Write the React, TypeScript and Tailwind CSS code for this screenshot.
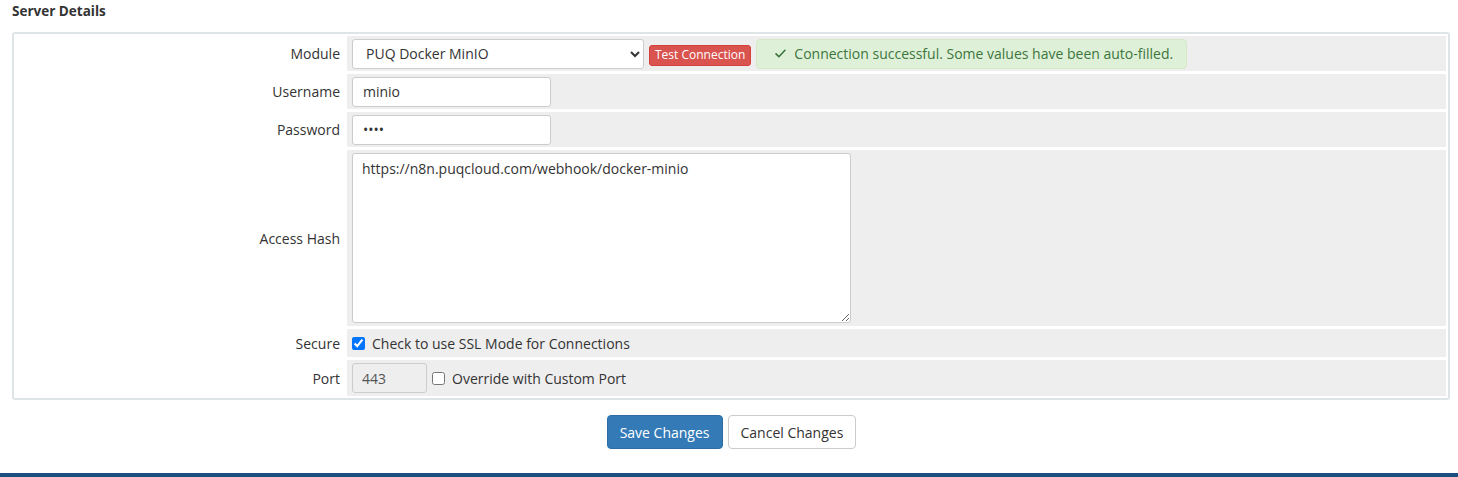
import React from "react";

const font = { fontFamily: '"Open Sans", "Liberation Sans", sans-serif' };

function Row({ label, className = "", children }: { label: string; className?: string; children: React.ReactNode }) {
  return (
    <div className={"flex " + className}>
      <div className="w-[331px] shrink-0 flex items-center justify-end pr-[7px] text-[14px] text-[#333]">{label}</div>
      <div className="flex-1 bg-[#eeeeee] flex items-center pl-[5px]">{children}</div>
    </div>
  );
}

export default function App() {
  return (
    <div className="min-h-[477px] bg-white text-[#333]" style={font}>
      <div className="px-[12px] pt-[1px] h-[21px] leading-[20px] text-[13.5px] font-bold text-[#333]">Server Details</div>
      <div className="ml-[12px] mr-[8px] mt-[11px] border-2 border-[#dfe4e6] rounded-[3px] p-[2px] flex flex-col gap-[3px]">
        <Row label="Module" className="h-[35px]">
          <select className="h-[30px] w-[292px] border border-[#ccc] rounded-[3px] bg-white pl-[9px] text-[14px] text-[#333]" defaultValue="minio">
            <option value="minio">PUQ Docker MinIO</option>
          </select>
          <button className="ml-[5px] mt-[3px] h-[21px] px-[5px] rounded-[3px] bg-[#d9534f] border border-[#d43f3a] text-white text-[12px] leading-[18px]">
            Test Connection
          </button>
          <div className="ml-[5px] h-[30px] w-[431px] flex items-center pl-[17px] bg-[#dff0d8] border border-[#d6e9c6] rounded-[4px] text-[14px] text-[#3c763d]">
            <svg width="13" height="13" viewBox="0 0 16 16" className="mr-[7px]" fill="none" stroke="#3c763d" strokeWidth="2" strokeLinecap="round" strokeLinejoin="round">
              <path d="M2.5 8.5l3.5 3.5 7.5-8" />
            </svg>
            Connection successful. Some values have been auto-filled.
          </div>
        </Row>
        <Row label="Username" className="h-[35px]">
          <input className="h-[30px] w-[199px] border border-[#ccc] rounded-[3px] bg-white px-[10px] text-[14px] text-[#333] outline-none" defaultValue="minio" />
        </Row>
        <Row label="Password" className="h-[35px]">
          <input type="password" className="h-[30px] w-[199px] border border-[#ccc] rounded-[3px] bg-white px-[10px] text-[14px] text-[#333] outline-none" defaultValue="test" />
        </Row>
        <Row label="Access Hash" className="h-[176px]">
          <textarea
            className="h-[170px] w-[499px] border border-[#ccc] rounded-[3px] bg-white px-[9px] py-[5px] text-[14px] leading-[20px] text-[#333] outline-none"
            defaultValue="https://n8n.puqcloud.com/webhook/docker-minio"
          />
        </Row>
        <Row label="Secure" className="h-[28px]">
          <label className="flex items-center text-[14px] text-[#333]">
            <input type="checkbox" defaultChecked className="w-[13px] h-[13px] m-0 mr-[7px]" />
            Check to use SSL Mode for Connections
          </label>
        </Row>
        <Row label="Port" className="h-[36px]">
          <input disabled className="h-[30px] w-[75px] border border-[#ccc] rounded-[3px] bg-[#eeeeee] px-[9px] text-[14px] text-[#555]" defaultValue="443" />
          <label className="ml-[5px] flex items-center text-[14px] text-[#333]">
            <input type="checkbox" className="w-[13px] h-[13px] m-0 mr-[7px]" />
            Override with Custom Port
          </label>
        </Row>
      </div>
      <div className="mt-[15px] pl-[5px] flex justify-center gap-[5px]">
        <button className="h-[34px] px-[12px] rounded-[4px] bg-[#337ab7] border border-[#2e6da4] text-white text-[14px]">Save Changes</button>
        <button className="h-[34px] px-[12px] rounded-[4px] bg-white border border-[#ccc] text-[#333] text-[14px]">Cancel Changes</button>
      </div>
      <div className="mt-[24px] h-[6px] bg-[#1a4f80]" />
    </div>
  );
}
